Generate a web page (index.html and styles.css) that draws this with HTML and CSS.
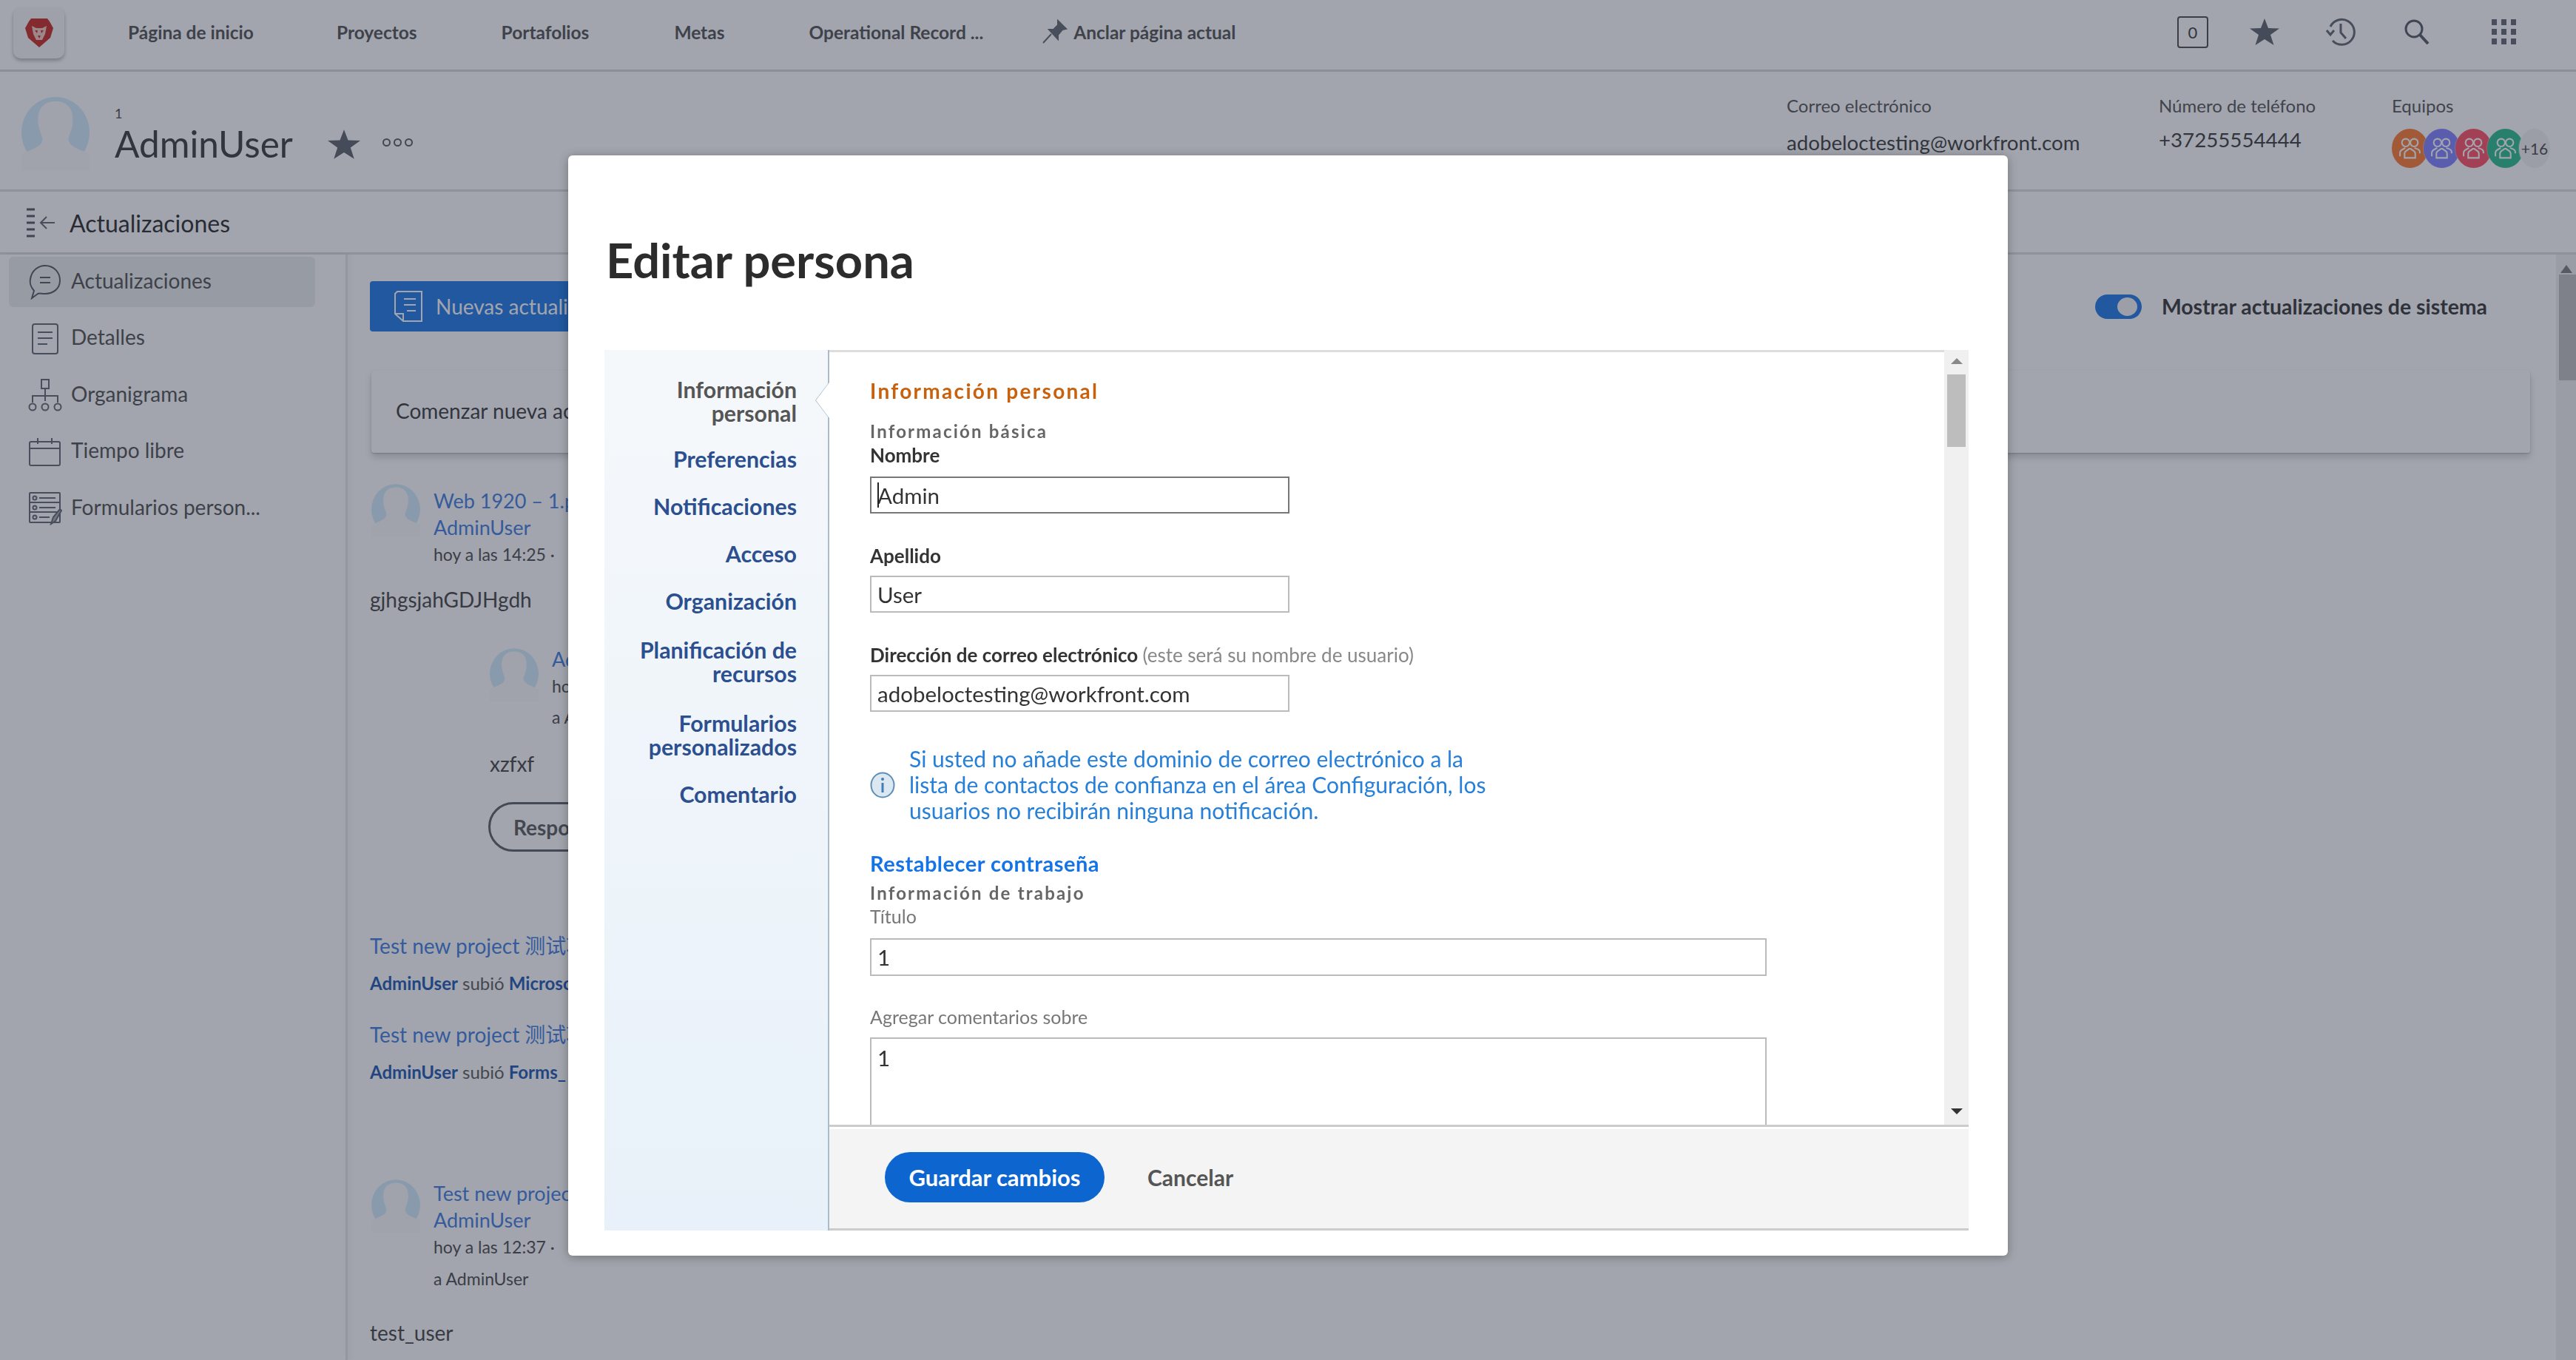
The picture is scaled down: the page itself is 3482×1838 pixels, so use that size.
FILE: index.html
```html
<!DOCTYPE html>
<html lang="es">
<head>
<meta charset="utf-8">
<title>Editar persona</title>
<link rel="stylesheet" href="styles.css">
</head>
<body>
<svg class="defs" width="0" height="0" aria-hidden="true">
  <symbol id="avatar" viewBox="0 0 92 100">
    <ellipse cx="46" cy="48" rx="46" ry="48" fill="#d0ecfb"/>
    <path d="M0 100V78C8 72 22 70 27 62C31 56 25 50 23 38C20 16 30 6 46 6S72 16 69 38C67 50 61 56 65 62C70 70 84 72 92 78V100Z" fill="#fbfbfb"/>
  </symbol>
  <symbol id="team" viewBox="0 0 32 32">
    <g fill="none" stroke="#fff" stroke-width="2">
      <circle cx="10.500" cy="8" r="5"/><circle cx="21.500" cy="8" r="5"/>
      <path d="M3 26v-5c0-3 3-4 7-6M29 22v-2c0-3-3-4-7-5"/>
      <path d="M9 28v-6c0-3 4-4 6-6h2c2 2 6 3 6 6v6z"/>
    </g>
  </symbol>
</svg>

<div class="app">
  <header class="topbar">
    <div class="logo">
      <svg width="38" height="40" viewBox="0 0 38 40"><path d="M8 1H30L33 5L38 14L34 27L19 40L4 27L0 14L5 5Z" fill="#c9221c"/><path d="M9 11L15 14H23L29 11L27 22L23 30H15L11 22Z" fill="#f4c9c2"/><path d="M13 17H17L16 21ZM25 17H21L22 21ZM17 24H21L19 28Z" fill="#c9221c"/></svg>
    </div>
    <nav class="mainnav">
      <a class="nv nv-home">Página de inicio</a>
      <a class="nv nv-proj">Proyectos</a>
      <a class="nv nv-port">Portafolios</a>
      <a class="nv nv-meta">Metas</a>
      <a class="nv nv-rec">Operational Record ...</a>
      <a class="nv nv-pin">
        <svg width="36" height="34" viewBox="0 0 36 34"><path d="M22 2L33 13L28 14L22 21L22 27L10 14L16 14L22 8ZM13 20L2 32" fill="#5d616c" stroke="#5d616c" stroke-width="2"/></svg>
        Anclar página actual
      </a>
    </nav>
    <div class="toptools">
      <span class="counter">0</span>
      <svg class="tool-star" width="40" height="36" viewBox="0 0 40 36"><path d="M20 0L25 13L40 13.500L28 22L32.500 36L20 28L7.500 36L12 22L0 13.500L15 13Z" fill="#565b66"/></svg>
      <svg class="tool-hist" width="40" height="38" viewBox="0 0 40 38"><path d="M6 12A17 17 0 1 1 9 31M20 8V20L27 28M1 17L6 23L11 17" fill="none" stroke="#5a5f6a" stroke-width="3"/></svg>
      <svg class="tool-search" width="36" height="34" viewBox="0 0 36 34"><circle cx="14" cy="13" r="11" fill="none" stroke="#4e535e" stroke-width="3"/><path d="M22 21L33 33" stroke="#4e535e" stroke-width="4"/></svg>
      <div class="tool-grid"><i></i><i></i><i></i><i></i><i></i><i></i><i></i><i></i><i></i></div>
    </div>
  </header>

  <section class="profile">
    <svg class="avatar-lg"><use href="#avatar"/></svg>
    <div class="who">
      <div class="who-sub">1</div>
      <div class="who-name">AdminUser</div>
    </div>
    <svg class="who-star" width="44" height="40" viewBox="0 0 40 36"><path d="M20 0L25 13L40 13.500L28 22L32.500 36L20 28L7.500 36L12 22L0 13.500L15 13Z" fill="#565b66"/></svg>
    <div class="who-more"><i></i><i></i><i></i></div>
    <div class="facts">
      <div class="fact fact-mail"><div class="fact-k">Correo electrónico</div><div class="fact-v">adobeloctesting@workfront.com</div></div>
      <div class="fact fact-tel"><div class="fact-k">Número de teléfono</div><div class="fact-v">+37255554444</div></div>
      <div class="fact fact-team">
        <div class="fact-k">Equipos</div>
        <div class="teams">
          <span class="team t1"><svg><use href="#team"/></svg></span>
          <span class="team t2"><svg><use href="#team"/></svg></span>
          <span class="team t3"><svg><use href="#team"/></svg></span>
          <span class="team t4"><svg><use href="#team"/></svg></span>
          <span class="team t5">+16</span>
        </div>
      </div>
    </div>
  </section>

  <div class="subhead">
    <svg width="40" height="40" viewBox="0 0 40 40"><path d="M0 2H11M0 11H11M0 20H11M0 29H11M0 38H11" stroke="#4d515c" stroke-width="3"/><path d="M38 20H19M27 12L19 20L27 28" fill="none" stroke="#5d616c" stroke-width="2"/></svg>
    <span>Actualizaciones</span>
  </div>

  <div class="main">
    <aside class="side">
      <a class="side-item on">
        <svg width="42" height="48" viewBox="0 0 42 48"><path d="M3 46L6 36C1 30 0 26 1 20C3 8 12 2 21 2C33 2 41 11 41 22C41 33 32 40 21 40C16 40 13 39 11 40Z" fill="none" stroke="#4f535e" stroke-width="2"/><path d="M14 18H28M14 25H28" stroke="#4f535e" stroke-width="2"/></svg>
        Actualizaciones
      </a>
      <a class="side-item">
        <svg width="42" height="44" viewBox="0 0 42 44"><rect x="4" y="2" width="34" height="40" rx="3" fill="none" stroke="#5d616c" stroke-width="2"/><path d="M11 13H31M11 21H31M11 29H24" stroke="#5d616c" stroke-width="2"/></svg>
        Detalles
      </a>
      <a class="side-item">
        <svg width="46" height="44" viewBox="0 0 46 44"><rect x="18" y="1" width="10" height="12" fill="none" stroke="#5d616c" stroke-width="2"/><path d="M23 13V30M6 32V23H40V32" fill="none" stroke="#5d616c" stroke-width="2"/><circle cx="6" cy="38" r="4.500" fill="none" stroke="#5d616c" stroke-width="2"/><circle cx="23" cy="38" r="4.500" fill="none" stroke="#5d616c" stroke-width="2"/><circle cx="40" cy="38" r="4.500" fill="none" stroke="#5d616c" stroke-width="2"/></svg>
        Organigrama
      </a>
      <a class="side-item">
        <svg width="44" height="40" viewBox="0 0 44 40"><rect x="1" y="6" width="41" height="32" rx="2" fill="none" stroke="#5d616c" stroke-width="2"/><path d="M1 15H42M12 1V9M31 1V9" stroke="#5d616c" stroke-width="2"/></svg>
        Tiempo libre
      </a>
      <a class="side-item">
        <svg width="44" height="46" viewBox="0 0 44 46"><rect x="1" y="2" width="41" height="40" rx="1" fill="none" stroke="#5d616c" stroke-width="2"/><path d="M1 15H42M1 28H42M14 9H36M14 22H36M14 35H28" stroke="#5d616c" stroke-width="2"/><circle cx="8" cy="9" r="2.500" fill="none" stroke="#5d616c" stroke-width="2"/><circle cx="8" cy="22" r="2.500" fill="none" stroke="#5d616c" stroke-width="2"/><circle cx="8" cy="35" r="2.500" fill="none" stroke="#5d616c" stroke-width="2"/><path d="M30 44L33 35L42 24L44 26L36 40Z" fill="#a9abb0" stroke="#5d616c" stroke-width="2"/></svg>
        Formularios person...
      </a>
    </aside>

    <section class="feed">
      <div class="feed-top">
        <a class="new-btn">
          <svg width="40" height="42" viewBox="0 0 40 42"><path d="M5 1H38V41H13L2 31V4Z" fill="none" stroke="#fff" stroke-width="2"/><path d="M14 11H30M14 19H30M18 27H30M2 31H13V41" fill="none" stroke="#fff" stroke-width="2"/></svg>
          Nuevas actualizaciones
        </a>
        <div class="sys-toggle"><span class="toggle"></span><b>Mostrar actualizaciones de sistema</b></div>
      </div>
      <div class="composer">Comenzar nueva actualización</div>

      <article class="post first-post">
        <svg class="avatar"><use href="#avatar"/></svg>
        <div class="meta">
          <a class="lnk">Web 1920 – 1.png</a>
          <a class="lnk">AdminUser</a>
          <span class="time">hoy a las 14:25 ·</span>
        </div>
      </article>
      <p class="body-txt first-txt">gjhgsjahGDJHgdh</p>

      <article class="post reply">
        <svg class="avatar"><use href="#avatar"/></svg>
        <div class="meta">
          <a class="lnk">AdminUser</a>
          <span class="time">hoy a las 14:25</span>
          <span class="time to">a AdminUser</span>
        </div>
      </article>
      <p class="body-txt reply-txt">xzfxf</p>
      <a class="reply-btn">Responder</a>

      <a class="lnk act-link first">Test new project 测试项目</a>
      <p class="act-line"><b>AdminUser</b> subió <b>Microsoft</b></p>
      <a class="lnk act-link">Test new project 测试项目</a>
      <p class="act-line"><b>AdminUser</b> subió <b>Forms_</b></p>

      <article class="post third">
        <svg class="avatar"><use href="#avatar"/></svg>
        <div class="meta">
          <a class="lnk">Test new project</a>
          <a class="lnk">AdminUser</a>
          <span class="time">hoy a las 12:37 ·</span>
          <span class="time to2">a AdminUser</span>
        </div>
      </article>
      <p class="body-txt last">test_user</p>
    </section>

    <div class="page-scroll"><span class="ps-up"></span><span class="ps-thumb"></span></div>
  </div>
</div>

<div class="overlay">
  <div class="modal">
    <h1>Editar persona</h1>
    <div class="modal-body">
      <nav class="tabs">
        <a class="tab cur">Información personal</a>
        <a class="tab">Preferencias</a>
        <a class="tab">Notificaciones</a>
        <a class="tab">Acceso</a>
        <a class="tab org">Organización</a>
        <a class="tab plan">Planificación de recursos</a>
        <a class="tab">Formularios personalizados</a>
        <a class="tab">Comentario</a>
      </nav>
      <div class="panel">
        <div class="scroller">
          <div class="form">
            <h2>Información personal</h2>
            <h3>Información básica</h3>
            <label class="lb lb-first">Nombre</label>
            <div class="field short focus"><i class="caret"></i>Admin</div>
            <label class="lb">Apellido</label>
            <div class="field short">User</div>
            <label class="lb">Dirección de correo electrónico <span>(este será su nombre de usuario)</span></label>
            <div class="field short">adobeloctesting@workfront.com</div>
            <div class="note">
              <svg width="34" height="36" viewBox="0 0 34 36"><ellipse cx="17" cy="18" rx="15.500" ry="16.500" fill="#dbe8f2" stroke="#5f8fb5" stroke-width="2"/><path d="M17 15V28" stroke="#3f7fb5" stroke-width="3"/><circle cx="17" cy="10" r="2" fill="#3f7fb5"/></svg>
              <p>Si usted no añade este dominio de correo electrónico a la lista de contactos de confianza en el área Configuración, los usuarios no recibirán ninguna notificación.</p>
            </div>
            <a class="reset">Restablecer contraseña</a>
            <h3 class="h3-work">Información de trabajo</h3>
            <label class="lb-light">Título</label>
            <div class="field long">1</div>
            <label class="lb-light lb-c">Agregar comentarios sobre</label>
            <div class="field long area">1</div>
          </div>
          <div class="scrollbar"><span class="sb-up"></span><span class="sb-thumb"></span><span class="sb-down"></span></div>
        </div>
        <div class="foot">
          <a class="save">Guardar cambios</a>
          <a class="cancel">Cancelar</a>
        </div>
      </div>
    </div>
  </div>
</div>
</body>
</html>
```

FILE: styles.css
```css
* { box-sizing: border-box; }
html, body { margin: 0; height: 100%; }
body { overflow: hidden; background: #fff; font-family: "Lato", "Noto Sans CJK SC", sans-serif; color: #3e3e3e; }
.defs { position: absolute; }
a { display: block; }
p, h1, h2, h3 { margin: 0; }

.app { height: 100vh; display: flex; flex-direction: column; }

/* top bar */
.topbar { height: 97px; flex: none; display: flex; align-items: center; padding: 0 80px 8px 18px; border-bottom: 3px solid #d8d8d8; }
.logo { width: 69px; height: 69px; border-radius: 10px; background: #f7f7f7; box-shadow: 0 3px 5px rgba(0,0,0,.3); display: flex; align-items: center; justify-content: center; margin-top: 2px; }
.mainnav { display: flex; align-items: center; font-size: 24.500px; font-weight: 700; color: #4b4b4b; margin-left: 86px; }
.nv-proj { margin-left: 112px; }
.nv-port { margin-left: 114px; }
.nv-meta { margin-left: 115px; }
.nv-rec { margin-left: 114px; }
.nv-pin { margin-left: 79px; display: flex; align-items: center; gap: 7px; }
.toptools { margin-left: auto; display: flex; align-items: center; }
.counter { width: 42px; height: 43px; border: 2px solid #444; border-radius: 4px; display: flex; align-items: center; justify-content: center; font-size: 22px; color: #333; }
.tool-star { margin-left: 56px; }
.tool-hist { margin-left: 63px; }
.tool-search { margin-left: 65px; }
.tool-grid { margin-left: 83px; width: 34px; height: 34px; display: grid; grid-template-columns: repeat(3, 7px); grid-auto-rows: 8px; gap: 5px 6px; }
.tool-grid i { background: #5d616c; }

/* profile header */
.profile { height: 162px; flex: none; display: flex; padding: 34px 0 0 29px; border-bottom: 3px solid #dcdcdc; position: relative; }
.avatar-lg { width: 92px; height: 100px; }
.who { margin-left: 34px; }
.who-sub { font-size: 18px; line-height: 20px; margin-top: 12px; color: #444; }
.who-name { font-size: 49.500px; line-height: 60px; color: #333; margin-top: 1px; }
.who-star { margin: 44px 0 0 47px; }
.who-more { display: flex; gap: 4px; margin: 56px 0 0 30px; height: 12px; }
.who-more i { width: 11px; height: 11px; border: 2px solid #555; border-radius: 50%; }
.facts { margin-left: auto; display: flex; }
.fact-k { font-size: 24px; line-height: 30px; color: #4e4e4e; }
.fact-v { font-size: 27.700px; line-height: 34px; color: #333; margin-top: 18px; }
.fact-mail { width: 503px; margin-top: -3px; }
.fact-tel { width: 315px; margin-top: -3px; }
.fact-tel .fact-v { margin-top: 14px; }
.fact-team { width: 249px; margin-top: -3px; }
.teams { display: flex; margin-top: 16px; }
.team { width: 49px; height: 53px; border-radius: 50%; display: flex; align-items: center; justify-content: center; margin-right: -6px; box-shadow: 0 0 0 1px rgba(255,255,255,.3); position: relative; }
.team svg { width: 33px; height: 34px; }
.t1 { background: #ff7628; }
.t2 { background: #7c7dff; }
.t3 { background: #ff4960; }
.t4 { background: #21bb87; }
.t5 { background: #f3f3f3; font-size: 21px; color: #444; width: 42px; }

/* sub header */
.subhead { height: 85px; flex: none; display: flex; align-items: center; gap: 18px; padding: 2px 0 0 36px; font-size: 32px; color: #222; border-bottom: 3px solid #dcdcdc; }

/* main */
.main { flex: 1; display: flex; min-height: 0; }
.side { width: 470px; flex: none; padding: 3px 0 0 12px; border-right: 3px solid #e6e6e6; box-shadow: 4px 0 6px rgba(0,0,0,.04); }
.side-item { width: 414px; height: 68px; margin-bottom: 8.500px; padding: 0 0 5px 26px; display: flex; align-items: center; gap: 12px; font-size: 28px; color: #4a4a4a; border-radius: 6px; }
.side-item svg { width: 46px; flex: none; margin-top: 5px; }
.side-item.on { background: #ecedee; }

.feed { flex: 1; padding: 36px 0 0 30px; min-width: 0; }
.feed-top { display: flex; justify-content: space-between; align-items: center; padding-right: 93px; }
.new-btn { width: 400px; height: 68px; border-radius: 4px; background: #1473e6; color: #fff; font-size: 28px; padding-left: 32px; display: flex; align-items: center; gap: 17px; white-space: nowrap; overflow: hidden; }
.sys-toggle { display: flex; align-items: center; gap: 27px; font-size: 28.400px; }
.sys-toggle b { font-weight: 700; color: #2e2e2e; }
.toggle { width: 63px; height: 33px; border-radius: 17px; background: #1473e6; position: relative; display: block; }
.toggle::after { content: ""; position: absolute; right: 6px; top: 4px; width: 27px; height: 25px; border-radius: 50%; background: #f4f4f4; }
.composer { width: 2918px; height: 111px; margin: 53px 0 0 2px; padding: 0 0 4px 33px; display: flex; align-items: center; font-size: 28px; color: #333; border-radius: 3px; box-shadow: 0 1px 2px rgba(0,0,0,.2), 0 6px 10px rgba(0,0,0,.18); }

.lnk { color: #3a78e0; font-size: 27px; line-height: 36px; white-space: nowrap; }
.time { display: block; font-size: 23px; line-height: 37px; color: #444; white-space: nowrap; }
.post { display: flex; gap: 18px; margin: 39px 0 0 2px; }
.first-post .meta { padding-top: 8px; }
.avatar { width: 66px; height: 72px; flex: none; margin-top: 3px; }
.body-txt { font-size: 28px; line-height: 36px; color: #3c3c3c; margin-top: 27px; }
.first-txt { margin-top: 24px; }
.reply { margin: 45px 0 0 162px; }
.to { margin-top: 5px; }
.reply-txt { margin: 26px 0 0 162px; }
.reply-btn { width: 300px; height: 67px; margin: 34px 0 0 160px; border: 3px solid #55595f; border-radius: 34px; padding-left: 31px; display: flex; align-items: center; font-size: 28px; font-weight: 700; color: #555; }
.act-link { font-size: 28px; }
.act-link.first { margin-top: 109px; }
.act-line { font-size: 24px; line-height: 30px; color: #555; margin: 18px 0 36px; }
.act-line b { color: #1450b0; font-weight: 700; }
.third { margin-top: 127px; }
.third .meta { padding-top: 4px; }
.to2 { margin-top: 6px; }
.last { margin-top: 36px; }

.page-scroll { width: 27px; flex: none; background: #f0f0f0; display: flex; flex-direction: column; align-items: center; }
.ps-up { margin-top: 14px; border: 8px solid transparent; border-top: 0; border-bottom: 11px solid #777; }
.ps-thumb { width: 23px; height: 143px; margin-top: 2px; background: #bdbdbd; margin-left: 4px; }

/* overlay + modal */
.overlay { position: fixed; inset: 0; background: rgba(49,55,73,.45); display: flex; justify-content: center; align-items: flex-start; padding-top: 210px; }
.modal { width: 1946px; height: 1487px; background: #fff; border-radius: 6px; box-shadow: 0 2px 14px rgba(0,0,0,.3); padding: 0 53px 0 49px; display: flex; flex-direction: column; }
.modal h1 { height: 263px; padding: 102px 0 0 2px; font-size: 65px; line-height: 78px; font-weight: 700; color: #2c2c2c; }
.modal-body { height: 1190px; display: flex; }

.tabs { width: 304px; flex: none; padding: 37px 42px 0 16px; text-align: right; background: linear-gradient(#f5f8fb, #e8f1f9); border-right: 2px solid #a9bccd; position: relative; font-size: 30.300px; line-height: 32px; font-weight: 700; color: #2b4f8f; }
.tabs::before, .tabs::after { content: ""; position: absolute; }
.tabs::before { right: -2px; top: 43px; width: 19px; height: 50px; background: #a9bccd; clip-path: polygon(100% 0, 0 50%, 100% 100%); }
.tabs::after { right: -2px; top: 44px; width: 18px; height: 48px; background: #fff; clip-path: polygon(100% 0, 0 50%, 100% 100%); }
.tab { margin-bottom: 32px; }
.tab.cur { color: #555; margin-bottom: 30px; }
.tab.org { margin-bottom: 34px; }
.tab.plan { margin-bottom: 35px; }

.panel { flex: 1; display: flex; flex-direction: column; min-width: 0; }
.scroller { height: 1050px; display: flex; overflow: hidden; border-bottom: 3px solid #ccc; }
.form { flex: 1; min-width: 0; padding: 35px 0 0 55px; border-top: 3px solid #ddd; }
.form h2 { font-size: 28px; line-height: 34px; font-weight: 700; color: #c9600c; letter-spacing: 2.300px; }
.form h3 { font-size: 24px; line-height: 30px; font-weight: 700; color: #666; letter-spacing: 2.200px; margin-top: 23px; }
.form .h3-work { margin-top: 9px; line-height: 26px; }
.lb { display: block; font-size: 26px; line-height: 30px; font-weight: 700; color: #333; margin: 42px 0 12px; }
.lb-first { margin: 2px 0 14px; }
.lb span { font-weight: 400; color: #888; }
.lb-light { display: block; font-size: 25px; line-height: 30px; color: #777; margin: 3px 0 15px; }
.lb-c { margin: 40px 0 13px; }
.field { height: 50px; border: 2px solid #bbb; padding: 4px 8px 0; font-size: 29.500px; line-height: 40px; color: #333; position: relative; }
.field.focus { border-color: #777; }
.caret { position: absolute; left: 8px; top: 6px; height: 34px; width: 2px; background: #222; }
.short { width: 567px; }
.long { width: 1212px; height: 51px; }
.area { height: 200px; padding-top: 6px; }
.note { display: flex; align-items: center; gap: 19px; width: 848px; margin-top: 46px; }
.note svg { flex: none; }
.note p { font-size: 30px; line-height: 35px; color: #2680d9; }
.reset { font-size: 29px; line-height: 36px; font-weight: 700; color: #1473e6; margin-top: 36px; letter-spacing: .5px; }

.scrollbar { width: 33px; flex: none; background: #f0f0f0; display: flex; flex-direction: column; align-items: center; position: relative; }
.sb-up { margin-top: 11px; border: 8px solid transparent; border-top: 0; border-bottom: 8px solid #888; }
.sb-thumb { width: 25px; height: 98px; margin-top: 14px; background: #bdbdbd; }
.sb-down { margin-top: auto; margin-bottom: 14px; border: 8px solid transparent; border-bottom: 0; border-top: 8px solid #333; }

.foot { flex: 1; margin-top: 3px; background: #f4f4f4; border-bottom: 3px solid #ccc; display: flex; align-items: center; padding: 0 0 5px 75px; }
.save { width: 297px; height: 68px; border-radius: 34px; background: #0d66d0; color: #fff; font-size: 31px; font-weight: 700; display: flex; align-items: center; justify-content: center; }
.cancel { margin-left: 58px; font-size: 30px; font-weight: 700; color: #555; }
```
